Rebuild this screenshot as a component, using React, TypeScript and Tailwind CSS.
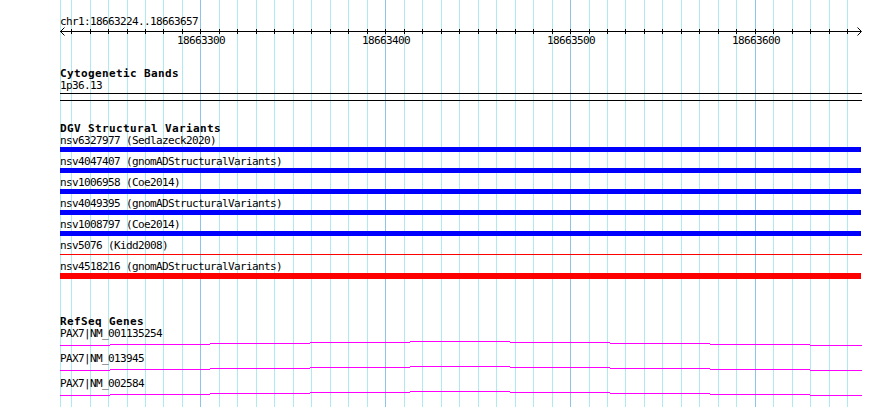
const START = 18663224;
const END = 18663657;
const LEFT = 60;
const WIDTH = 802;
const SCALE = WIDTH / (END - START + 1);

// bp -> pixel offset from the track's left edge
const toX = (bp: number) => Math.round((bp - START) * SCALE);

const ticks: number[] = [];
for (let bp = 18663230; bp <= END; bp += 10) ticks.push(bp);

const variants = [
  { label: 'nsv6327977 (Sedlazeck2020)', kind: 'gain' },
  { label: 'nsv4047407 (gnomADStructuralVariants)', kind: 'gain' },
  { label: 'nsv1006958 (Coe2014)', kind: 'gain' },
  { label: 'nsv4049395 (gnomADStructuralVariants)', kind: 'gain' },
  { label: 'nsv1008797 (Coe2014)', kind: 'gain' },
  { label: 'nsv5076 (Kidd2008)', kind: 'thin' },
  { label: 'nsv4518216 (gnomADStructuralVariants)', kind: 'loss' },
];

const genes = ['PAX7|NM_001135254', 'PAX7|NM_013945', 'PAX7|NM_002584'];

// intron line steps, [start, end, y]
const intron = [
  [0, 50, 5],
  [50, 150, 4],
  [150, 250, 3],
  [250, 350, 2],
  [350, 450, 1],
  [450, 550, 2],
  [550, 650, 3],
  [650, 750, 4],
  [750, 802, 5],
];

const mono = "font-['DejaVu_Sans_Mono',monospace] text-[11px] tracking-[-0.62px]";

function Grid() {
  return (
    <svg className="absolute inset-0" width={890} height={407} shapeRendering="crispEdges">
      <rect x={LEFT} y={0} width={1} height={407} fill="#aeeaf0" />
      {ticks.map((bp) => (
        <rect
          key={bp}
          x={LEFT + toX(bp)}
          y={0}
          width={1}
          height={407}
          fill={bp % 100 === 0 ? '#8ec4e6' : '#aeeaf0'}
        />
      ))}
    </svg>
  );
}

function Ruler() {
  return (
    <svg width={WIDTH} height={19} className="block overflow-visible">
      <g shapeRendering="crispEdges">
        <rect x={0} y={4} width={WIDTH - 1} height={1} fill="#000" />
        {ticks.map((bp) => (
          <rect key={bp} x={toX(bp)} y={2} width={1} height={5} fill="#000" />
        ))}
      </g>
      <path d="M4.5 0.5 L0.5 4.5 L4.5 8.5 M797.5 0.5 L801.5 4.5 L797.5 8.5" stroke="#000" fill="none" />
      {ticks
        .filter((bp) => bp % 100 === 0)
        .map((bp) => (
          <text key={bp} x={toX(bp) + 1} y={17} textAnchor="middle" fill="#000" className={mono}>
            {bp}
          </text>
        ))}
    </svg>
  );
}

function VariantRow({ label, kind }: { label: string; kind: string }) {
  return (
    <div className="h-[21px]">
      <div className="h-[10px] leading-[10px] whitespace-nowrap">{label}</div>
      {kind === 'gain' && <div className="mt-[1px] h-[5px] w-[801px] bg-[#0000ff]" />}
      {kind === 'loss' && <div className="mt-[1px] h-[6px] w-[801px] bg-[#ff0000]" />}
      {kind === 'thin' && <div className="mt-[3px] h-px w-[802px] bg-[#ff0000]" />}
    </div>
  );
}

function GeneRow({ label }: { label: string }) {
  return (
    <div className="h-[25px]">
      <div className="h-[10px] leading-[10px] whitespace-nowrap">{label}</div>
      <svg width={WIDTH} height={6} className="mt-[1px] block" shapeRendering="crispEdges">
        {intron.map(([a, b, y]) => (
          <rect key={a} x={a} y={y} width={b - a} height={1} fill="#ff00ff" />
        ))}
      </svg>
    </div>
  );
}

function TrackTitle({ children, className = '' }: { children: string; className?: string }) {
  return (
    <div className={`h-[10px] leading-[10px] whitespace-nowrap font-bold tracking-[0.38px] ${className}`}>
      {children}
    </div>
  );
}

export default function App() {
  return (
    <div className={`relative w-[890px] h-[407px] overflow-hidden bg-white text-black ${mono}`}>
      <Grid />
      <div className="relative pl-[60px]">
        <div className="mt-[17px] h-[10px] leading-[10px] whitespace-nowrap">chr1:18663224..18663657</div>
        <Ruler />

        <TrackTitle className="mt-[23px]">Cytogenetic Bands</TrackTitle>
        <div className="mt-[2px] h-[10px] leading-[10px]">1p36.13</div>
        <div className="mt-[2px] h-px w-[802px] bg-black" />
        <div className="mt-[6px] h-px w-[802px] bg-black" />

        <TrackTitle className="mt-[23px]">DGV Structural Variants</TrackTitle>
        <div className="mt-[2px]">
          {variants.map((v) => (
            <VariantRow key={v.label} label={v.label} kind={v.kind} />
          ))}
        </div>

        <TrackTitle className="mt-[34px]">RefSeq Genes</TrackTitle>
        <div className="mt-[2px]">
          {genes.map((g) => (
            <GeneRow key={g} label={g} />
          ))}
        </div>
      </div>
    </div>
  );
}
